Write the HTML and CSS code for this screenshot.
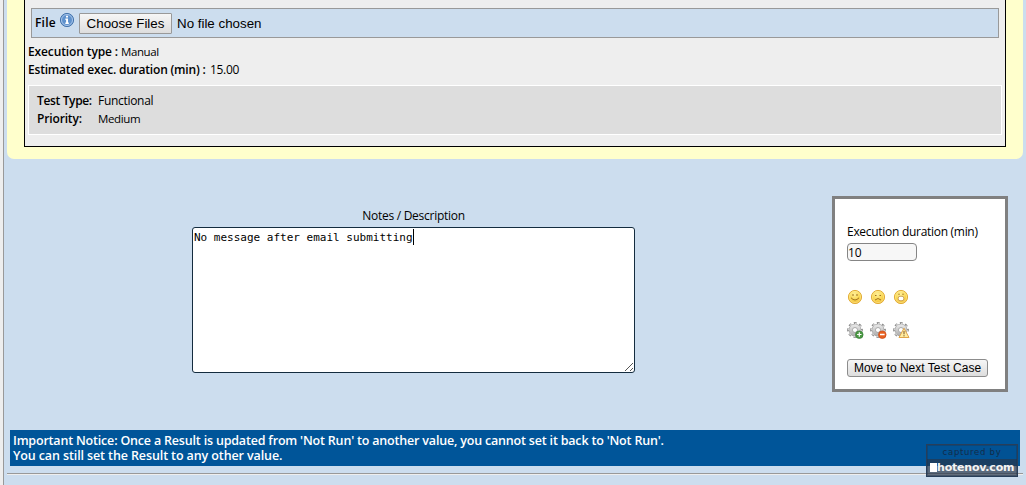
FILE: index.html
```html
<!DOCTYPE html>
<html lang="en">
<head>
<meta charset="utf-8">
<title>Test execution</title>
<link rel="stylesheet" href="styles.css">
</head>
<body>
<svg class="defs" width="0" height="0" aria-hidden="true">
  <defs>
    <radialGradient id="gold" cx=".45" cy=".3" r=".7"><stop offset="0" stop-color="#fff09a"/><stop offset=".6" stop-color="#fad650"/><stop offset="1" stop-color="#efb93a"/></radialGradient>
    <linearGradient id="steel" x2="0" y2="1"><stop offset="0" stop-color="#e4e4e4"/><stop offset="1" stop-color="#b4b4b4"/></linearGradient>
    <g id="face"><circle cx="8" cy="8" r="6.6" fill="url(#gold)" stroke="#e2ad3a"/><circle cx="8" cy="8" r="5.6" fill="none" stroke="#fff0a0" stroke-width=".5"/></g>
    <g id="gear">
      <circle cx="8" cy="8" r="6.7" fill="none" stroke="#8b8b8b" stroke-width="2.4" stroke-dasharray="2.7 2.562" stroke-dashoffset="1.35"/>
      <circle cx="8" cy="8" r="4.2" fill="none" stroke="#a0a0a0" stroke-width="4.2"/>
      <circle cx="8" cy="8" r="6.4" fill="none" stroke="#d2d2d2" stroke-width="1.7" stroke-dasharray="1.7 3.327" stroke-dashoffset=".85"/>
      <circle cx="8" cy="8" r="4.2" fill="none" stroke="url(#steel)" stroke-width="3.1"/>
    </g>
  </defs>
</svg>
<main class="page">
  <section class="panel">
    <div class="spec">
      <div class="file-row">
        <b class="label file-label">File</b>
        <svg class="info" width="16" height="16" viewBox="0 0 16 16"><circle cx="8" cy="8" r="6.6" fill="#5f92cd" stroke="#4575ad"/><circle cx="8" cy="8" r="5.5" fill="none" stroke="#a9c5e8"/><path d="M7 3.7h2v1.8H7zM6.4 6.6H9v4h.8V12H6.3v-1.4h.8V8h-.7z" fill="#fff"/></svg>
        <button class="choose">Choose Files</button>
        <span class="chosen">No file chosen</span>
      </div>
      <div class="meta"><b class="label exec-label">Execution type :</b><span class="manual">Manual</span></div>
      <div class="meta"><b class="label estimate-label">Estimated exec. duration (min) :</b><span class="minutes">15.00</span></div>
      <div class="fields">
        <b class="label type-label">Test Type:</b><span class="functional">Functional</span>
        <b class="label priority-label">Priority:</b><span class="medium">Medium</span>
      </div>
    </div>
  </section>
  <section class="execution">
    <div class="notes">
      <label class="notes-label" for="notes">Notes / Description</label>
      <div class="editor" id="notes"><span class="typed">No message after email submitting</span><svg class="grip" width="10" height="10" viewBox="0 0 10 10"><path d="M1 9 9 1M6 9l3-3" stroke="#555" stroke-width="1"/></svg></div>
    </div>
    <aside class="card">
      <label class="duration-label" for="duration">Execution duration (min)</label>
      <input class="duration" id="duration" value="10">
      <div class="icons faces">
        <svg width="16" height="16" viewBox="0 0 16 16"><use href="#face"/><path d="M6 5v2M10 5v2M4 8.8q4 4.4 8 0" fill="none" stroke="#a0701f" stroke-width="1"/></svg>
        <svg width="16" height="16" viewBox="0 0 16 16"><use href="#face"/><path d="M5 6.5h1.5M9.5 6.5H11M5 11q3-3 6 0" fill="none" stroke="#a0701f" stroke-width="1"/></svg>
        <svg width="16" height="16" viewBox="0 0 16 16"><use href="#face"/><path d="M6 4.6v1.4M10 4.6v1.4" stroke="#a0701f"/><rect x="5.2" y="7.3" width="5.6" height="4.4" rx="1.8" fill="#fff" stroke="#c09042" stroke-width=".8"/></svg>
      </div>
      <div class="icons gears">
        <svg width="17" height="17" viewBox="0 0 17 17"><use href="#gear"/><circle cx="12.3" cy="12.7" r="3.8" fill="#4b9942" stroke="#357d36" stroke-width=".7"/><path d="M10.1 12.5h4.4M12.3 10.3v4.4" stroke="#fff" stroke-width="1.2"/></svg>
        <svg width="17" height="17" viewBox="0 0 17 17"><use href="#gear"/><circle cx="12.3" cy="12.7" r="3.8" fill="#e8601f" stroke="#ca4814" stroke-width=".7"/><path d="M10 12.5h4.6" stroke="#fff" stroke-width="1.5"/></svg>
        <svg width="17" height="17" viewBox="0 0 17 17"><use href="#gear"/><path d="M11 6.2 16 15.5H6z" fill="#ffec9f" stroke="#dfa44a" stroke-linejoin="round"/><path d="M11 9v3.3M11 13.2v1.2" stroke="#775126" stroke-width="1"/></svg>
      </div>
      <button class="next">Move to Next Test Case</button>
    </aside>
  </section>
  <div class="notice"><span class="notice-first">Important Notice: Once a Result is updated from 'Not Run' to another value, you cannot set it back to 'Not Run'.</span><span class="notice-second">You can still set the Result to any other value.</span></div>
  <hr class="rule">
</main>
<div class="watermark"><span class="captured">captured by</span><span class="site"><i class="site-mark"></i>hotenov.com</span></div>
</body>
</html>
```
FILE: styles.css
```css
* { box-sizing: border-box; }
body { margin: 0; height: 485px; overflow: hidden; position: relative; background: #eee; color: #000; font: 12px/18px "Open Sans", "Noto Sans", sans-serif; }
.defs { position: absolute; }
.page { height: 485px; margin-left: 3px; padding: 0 3px; border-left: 1px solid #999; background: #cde; }
.panel { height: 159px; padding: 0 17px; background: #ffc; border-radius: 0 0 7px 7px; }
.spec { height: 147px; padding: 8px 3px 0; border: solid #000; border-width: 0 1px 1px; background: #eee; }
.file-row { display: flex; align-items: center; height: 30px; margin: 0 3px 5px; padding-left: 3px; border: 1px solid #999; background: #cde; }
.label { font-weight: 600; }
span, .label, label { white-space: nowrap; }
.file-label { width: 24px; letter-spacing: .2px; }
.info { margin: -7px 4px 0 0; }
.choose, .next { padding: 0; border: 1px solid #8c8c8c; background: linear-gradient(#f6f6f6, #ddd); color: #000; font-family: "Liberation Sans", Arial, sans-serif; white-space: nowrap; }
.choose { width: 93px; height: 21px; margin-right: 5px; font-size: 13.33px; border-color: #999; border-radius: 1px; }
.chosen { font: 13.33px "Liberation Sans", Arial, sans-serif; }
.meta { display: flex; height: 18px; }
.exec-label { width: 93px; letter-spacing: -.12px; }
.estimate-label { width: 182px; letter-spacing: -.2px; }
.manual { letter-spacing: -.4px; }
.minutes { letter-spacing: -.3px; }
.manual, .medium { font-size: 11.5px; }
.type-label { letter-spacing: -.35px; }
.priority-label { letter-spacing: -.15px; }
.functional { letter-spacing: -.3px; }
.medium { letter-spacing: -.35px; }
.fields { display: grid; grid-template: 18px 18px / 61px 1fr; height: 50px; margin: 6px 0 0; padding: 6px 8px; border: 1px solid #fff; background: #ddd; }
.execution { display: flex; height: 271px; padding: 37px 15px 0 185px; justify-content: space-between; align-items: flex-start; }
.notes { display: flex; flex-direction: column; width: 443px; padding-top: 11px; }
.notes-label { align-self: center; height: 20px; letter-spacing: -.27px; }
.editor { position: relative; height: 146px; padding: 0 1px; border: 1px solid #142c3f; border-radius: 3px; background: #fff; }
.typed { display: inline-block; height: 16px; border-right: 1px solid #000; font: 11px/18px "DejaVu Sans Mono", monospace; }
.grip { position: absolute; right: 0; bottom: 0; }
.card { display: flex; flex-direction: column; align-items: flex-start; width: 176px; height: 196px; padding: 24px 12px 0; border: 3px solid #808080; background: #fff; }
.duration-label { height: 20px; letter-spacing: -.29px; }
.duration { width: 70px; height: 18px; padding: 1px 0; border: 1px solid #858585; border-radius: 4px; background: #f7f7f7; font: 12px "Open Sans", sans-serif; }
.icons { display: flex; }
.faces { gap: 7px; margin-top: 28px; }
.gears { gap: 6px; margin-top: 17px; }
.next { width: 141px; height: 18px; margin-top: 20px; font-size: 12px; line-height: 16px; border-radius: 3px; }
.notice { display: flex; flex-direction: column; height: 36px; margin: 0 3px; padding: 3px; background: #059; color: #fff; font: 600 12.5px/15px "Open Sans", sans-serif; }
.notice-first { letter-spacing: -.187px; }
.notice-second { letter-spacing: -.11px; }
.rule { height: 2px; margin: 7px 0 0; border: 0; border-top: 1px solid #999; border-bottom: 1px solid #eee; }
.watermark { position: absolute; left: 926px; top: 444px; display: flex; flex-direction: column; width: 92px; height: 33px; border: 1px solid #283e59; background: rgba(20,40,70,.06); outline: 1px solid rgba(35,50,70,.35); outline-offset: -2px; }
.captured { height: 14px; text-align: center; color: #122c49; font: 8.5px/15px "DejaVu Sans", sans-serif; letter-spacing: .7px; }
.site { display: flex; align-items: center; flex: 1; padding-left: 3px; background: rgba(40,55,75,.68); color: #f4f4f4; font: bold 11px/14px "DejaVu Sans", sans-serif; letter-spacing: -.2px; }
.site-mark { width: 7px; height: 9px; background: #fff; }
```
